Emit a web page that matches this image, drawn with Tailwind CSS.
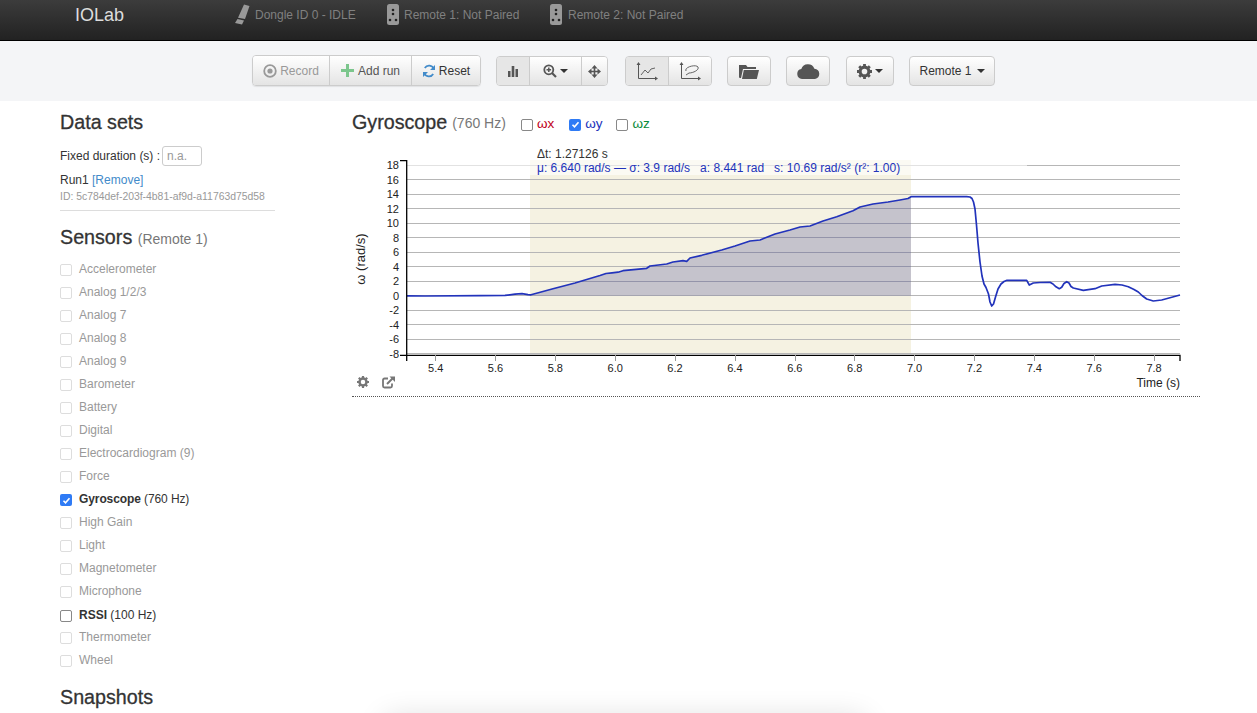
<!DOCTYPE html>
<html lang="en">

<head>
    <meta charset="UTF-8">
    <meta name="viewport" content="width=device-width, initial-scale=1.0">
    <title>IOLab</title>
    <script src="https://cdn.jsdelivr.net/npm/@tailwindcss/browser@4"></script>
</head>

<body>
    <div class="relative h-[713px] overflow-hidden bg-white text-[12px] text-[#333] font-['Liberation_Sans',Arial,sans-serif]">

        <!-- top bar -->
        <div class="flex h-[41px] items-start border-b border-black bg-gradient-to-b from-[#3c3c3c] to-[#222] pl-[75px] pt-[3px] text-[#808080]">
            <div class="w-[159px] text-[18px] leading-[24px] text-[#ddd]">IOLab</div>
            <div class="flex w-[153px] items-center">
                <svg class="h-[21px] w-[16px]" viewBox="0 0 16 21"><path fill="#999" d="M10 .5 15.500 2 11 15 4 13.800ZM3.500 15 10 16.500 8 20.500 1 19Z"/></svg>
                <span class="ml-[5px] pt-px leading-[22px]">Dongle ID 0 - IDLE</span>
            </div>
            <div class="flex w-[163px] items-center">
                <svg class="h-[21px] w-[12px]" viewBox="0 0 12 21"><rect width="12" height="21" rx="2.500" fill="#999"/><circle cx="6" cy="6" r="1.300" fill="#222"/><circle cx="6" cy="10" r="1.300" fill="#222"/><circle cx="3" cy="16" r="1.300" fill="#222"/><circle cx="9" cy="16" r="1.300" fill="#222"/></svg>
                <span class="ml-[5px] pt-px leading-[22px]">Remote 1: Not Paired</span>
            </div>
            <div class="flex items-center">
                <svg class="h-[21px] w-[12px]" viewBox="0 0 12 21"><rect width="12" height="21" rx="2.500" fill="#999"/><circle cx="6" cy="6" r="1.300" fill="#222"/><circle cx="6" cy="10" r="1.300" fill="#222"/><circle cx="3" cy="16" r="1.300" fill="#222"/><circle cx="9" cy="16" r="1.300" fill="#222"/></svg>
                <span class="ml-[6px] pt-px leading-[22px]">Remote 2: Not Paired</span>
            </div>
        </div>

        <!-- toolbar -->
        <div class="flex h-[60px] items-start bg-[#f4f5f7] pl-[252px] pt-[14px]">
            <div class="flex h-[31px] rounded-[4px] border border-[#ccc] shadow-[0_1px_1px_rgba(0,0,0,.08)]">
                <div class="flex w-[77px] items-center justify-center gap-[3px] rounded-l-[3px] border-r border-[#ccc] bg-gradient-to-b from-white to-[#e4e4e4] text-[#999]">
                    <svg class="h-[14px] w-[14px]" viewBox="0 0 14 14"><circle cx="7" cy="7" r="5.800" fill="none" stroke="#999" stroke-width="1.800"/><circle cx="7" cy="7" r="2.600" fill="#999"/></svg>
                    Record
                </div>
                <div class="flex w-[82px] items-center justify-center gap-[4px] border-r border-[#ccc] bg-gradient-to-b from-white to-[#e4e4e4] text-[#555]">
                    <svg class="h-[13px] w-[13px]" viewBox="0 0 13 13"><path fill="#7cc68d" d="M5 0h3v5h5v3H8v5H5V8H0V5h5z"/></svg>
                    Add run
                </div>
                <div class="flex w-[68px] items-center justify-center gap-[3px] rounded-r-[3px] bg-gradient-to-b from-white to-[#e4e4e4]">
                    <svg class="h-[14px] w-[14px]" viewBox="0 0 14 14"><path fill="none" stroke="#428bca" stroke-width="1.800" d="M11.800 5A5 5 0 0 0 2.800 4M2.200 9A5 5 0 0 0 11.200 10"/><path fill="#428bca" d="M13 1v5H8zM1 13V8h5z"/></svg>
                    Reset
                </div>
            </div>

            <div class="ml-[15px] mt-px flex h-[30px] rounded-[4px] border border-[#ccc]">
                <div class="flex w-[33px] items-center justify-center rounded-l-[3px] border-r border-[#ccc] bg-[#e6e6e6]">
                    <svg class="h-[12px] w-[12px]" viewBox="0 0 12 12"><path fill="#555" d="M1 6h2.500v6H1zM4.700 1h2.600v11H4.700zM8.500 4H11v8H8.500z"/></svg>
                </div>
                <div class="flex w-[52px] items-center justify-center gap-[3px] border-r border-[#ccc] bg-gradient-to-b from-white to-[#e4e4e4]">
                    <svg class="h-[14px] w-[14px]" viewBox="0 0 14 14"><circle cx="5.800" cy="5.800" r="4.500" fill="none" stroke="#555" stroke-width="1.800"/><path stroke="#555" stroke-width="2.200" d="m9 9 4 4"/><path stroke="#555" stroke-width="1.500" d="M3.500 5.800h4.600M5.800 3.500v4.600"/></svg>
                    <span class="h-0 w-0 border-x-[4px] border-t-[4px] border-x-transparent border-t-[#333]"></span>
                </div>
                <div class="flex w-[25px] items-center justify-center rounded-r-[3px] bg-gradient-to-b from-white to-[#e4e4e4]">
                    <svg class="h-[13px] w-[13px]" viewBox="0 0 13 13"><path fill="#555" d="M5.700 3.500h1.600v2.200h2.200V3.500L13 6.500l-3.500 3V7.300H7.300v2.200h2.200l-3 3.500-3-3.500h2.200V7.300H3.500v2.200L0 6.500l3.500-3v2.200h2.200V3.500H3.500l3-3.500 3 3.500z"/></svg>
                </div>
            </div>

            <div class="ml-[17px] mt-px flex h-[30px] rounded-[4px] border border-[#ccc]">
                <div class="flex w-[43px] items-center justify-center rounded-l-[3px] border-r border-[#ccc] bg-[#e6e6e6]">
                    <svg class="h-[19px] w-[22px]" viewBox="0 0 22 19" fill="none" stroke="#555"><path d="M2.500 1v15.500H21"/><path fill="#555" stroke="none" d="M2.500 0 4.500 3H.5zM22 16.500 19 18.500v-4z"/><path stroke-width=".9" d="M5 13 9 8l3 3 3-4 4-1"/></svg>
                </div>
                <div class="flex w-[42px] items-center justify-center rounded-r-[3px] bg-gradient-to-b from-white to-[#e4e4e4]">
                    <svg class="h-[19px] w-[22px]" viewBox="0 0 22 19" fill="none" stroke="#555"><path d="M2.500 1v15.500H21"/><path fill="#555" stroke="none" d="M2.500 0 4.500 3H.5zM22 16.500 19 18.500v-4z"/><path stroke-width=".9" d="M7 9c-2-4 10-7 12-4 1.500 3-5 6-9 6l-3 2"/></svg>
                </div>
            </div>

            <div class="ml-[15px] mt-px flex h-[30px] w-[44px] items-center justify-center rounded-[4px] border border-[#ccc] bg-gradient-to-b from-white to-[#e4e4e4]">
                <svg class="h-[15px] w-[20px]" viewBox="0 0 20 15"><path fill="#555" d="M0 1h7l1.500 2H17v2H4L2 14H.5L0 13zM4.800 6H20l-2.200 9H3z"/></svg>
            </div>
            <div class="ml-[15px] mt-px flex h-[30px] w-[44px] items-center justify-center rounded-[4px] border border-[#ccc] bg-gradient-to-b from-white to-[#e4e4e4]">
                <svg class="h-[16px] w-[23px]" viewBox="0 0 23 16"><path fill="#555" d="M5 16A5 5 0 0 1 4.300 6.100 7 7 0 0 1 17.400 5.700 5.200 5.200 0 0 1 18 16z"/></svg>
            </div>
            <div class="ml-[16px] mt-px flex h-[30px] w-[48px] items-center justify-center gap-[3px] rounded-[4px] border border-[#ccc] bg-gradient-to-b from-white to-[#e4e4e4]">
                <svg class="h-[15px] w-[15px]" viewBox="0 0 24 24"><circle cx="12" cy="12" r="7" fill="none" stroke="#555" stroke-width="5"/><g stroke="#555" stroke-width="4.500"><path d="M12 0v5M12 19v5M0 12h5M19 12h5M3.500 3.500 7 7M17 17l3.500 3.500M20.500 3.500 17 7M7 17l-3.500 3.500"/></g></svg>
                <span class="h-0 w-0 border-x-[4px] border-t-[4px] border-x-transparent border-t-[#333]"></span>
            </div>
            <div class="ml-[15px] mt-px flex h-[30px] w-[86px] items-center justify-center gap-[5px] rounded-[4px] border border-[#ccc] bg-gradient-to-b from-white to-[#e4e4e4]">
                Remote 1
                <span class="h-0 w-0 border-x-[4px] border-t-[4px] border-x-transparent border-t-[#333]"></span>
            </div>
        </div>

        <div class="flex">
            <!-- left column -->
            <div class="ml-[60px] w-[215px]">
                <h3 class="mt-[10px] text-[19.700px] leading-[22px] [-webkit-text-stroke:0.3px]">Data sets</h3>
                <div class="mt-[13px] flex items-center">
                    Fixed duration (s) :
                    <span class="ml-[2px] h-[20px] w-[40px] rounded-[3px] border border-[#ccc] pl-[4px] leading-[18px] text-[#999]">n.a.</span>
                </div>
                <div class="mt-[6px] leading-[17px]">Run1 <span class="text-[#428bca]">[Remove]</span></div>
                <div class="mt-px pb-[7px] text-[10.400px] leading-[13px] text-[#999] border-b border-[#ddd]">ID: 5c784def-203f-4b81-af9d-a11763d75d58</div>

                <h3 class="mt-[15px] text-[19.700px] leading-[22px]"><span class="[-webkit-text-stroke:0.3px]">Sensors</span> <span class="text-[14px] text-[#777]">(Remote 1)</span></h3>

                <div class="mt-[7px] flex flex-col text-[#999]">
                    <div class="flex h-[23px] items-center gap-[7px]"><span class="mt-[2px] size-[12px] rounded-[2px] border border-[#ddd]"></span>Accelerometer</div>
                    <div class="flex h-[23px] items-center gap-[7px]"><span class="mt-[2px] size-[12px] rounded-[2px] border border-[#ddd]"></span>Analog 1/2/3</div>
                    <div class="flex h-[23px] items-center gap-[7px]"><span class="mt-[2px] size-[12px] rounded-[2px] border border-[#ddd]"></span>Analog 7</div>
                    <div class="flex h-[23px] items-center gap-[7px]"><span class="mt-[2px] size-[12px] rounded-[2px] border border-[#ddd]"></span>Analog 8</div>
                    <div class="flex h-[23px] items-center gap-[7px]"><span class="mt-[2px] size-[12px] rounded-[2px] border border-[#ddd]"></span>Analog 9</div>
                    <div class="flex h-[23px] items-center gap-[7px]"><span class="mt-[2px] size-[12px] rounded-[2px] border border-[#ddd]"></span>Barometer</div>
                    <div class="flex h-[23px] items-center gap-[7px]"><span class="mt-[2px] size-[12px] rounded-[2px] border border-[#ddd]"></span>Battery</div>
                    <div class="flex h-[23px] items-center gap-[7px]"><span class="mt-[2px] size-[12px] rounded-[2px] border border-[#ddd]"></span>Digital</div>
                    <div class="flex h-[23px] items-center gap-[7px]"><span class="mt-[2px] size-[12px] rounded-[2px] border border-[#ddd]"></span>Electrocardiogram (9)</div>
                    <div class="flex h-[23px] items-center gap-[7px]"><span class="mt-[2px] size-[12px] rounded-[2px] border border-[#ddd]"></span>Force</div>
                    <div class="flex h-[23px] items-center gap-[7px] pt-px text-[#333]">
                        <span class="mt-[2px] flex size-[12px] items-center justify-center rounded-[2px] bg-[#2f7bf5]"><svg class="size-[9px]" viewBox="0 0 9 9"><path fill="none" stroke="#fff" stroke-width="1.600" d="m1.500 4.800 2 2 4-4.600"/></svg></span>
                        <span class="tracking-[-0.1px]"><b>Gyroscope</b> (760 Hz)</span>
                    </div>
                    <div class="flex h-[23px] items-center gap-[7px]"><span class="mt-[2px] size-[12px] rounded-[2px] border border-[#ddd]"></span>High Gain</div>
                    <div class="flex h-[23px] items-center gap-[7px]"><span class="mt-[2px] size-[12px] rounded-[2px] border border-[#ddd]"></span>Light</div>
                    <div class="flex h-[23px] items-center gap-[7px]"><span class="mt-[2px] size-[12px] rounded-[2px] border border-[#ddd]"></span>Magnetometer</div>
                    <div class="flex h-[23px] items-center gap-[7px]"><span class="mt-[2px] size-[12px] rounded-[2px] border border-[#ddd]"></span>Microphone</div>
                    <div class="flex h-[23px] items-center gap-[7px] pt-[2px] text-[#333]"><span class="mt-[2px] size-[12px] rounded-[2px] border border-[#888]"></span><span><b>RSSI</b> (100 Hz)</span></div>
                    <div class="flex h-[23px] items-center gap-[7px]"><span class="mt-[2px] size-[12px] rounded-[2px] border border-[#ddd]"></span>Thermometer</div>
                    <div class="flex h-[23px] items-center gap-[7px]"><span class="mt-[2px] size-[12px] rounded-[2px] border border-[#ddd]"></span>Wheel</div>
                </div>

                <h3 class="mt-[15px] text-[19.700px] leading-[22px] [-webkit-text-stroke:0.3px]">Snapshots</h3>
            </div>

            <!-- chart column -->
            <div class="ml-[77px] w-[848px]">
                <div class="mt-[10px] flex h-[22px] items-center">
                    <h3 class="mt-[2px] text-[19.700px] [-webkit-text-stroke:0.3px]">Gyroscope</h3>
                    <span class="ml-[5px] mt-[3px] text-[14px] text-[#777]">(760 Hz)</span>
                    <span class="ml-[15px] mt-[5px] size-[12px] rounded-[2px] border border-[#888]"></span>
                    <span class="ml-[4px] mt-[4px] text-[13.500px] text-[#c00020]">ωx</span>
                    <span class="ml-[15px] mt-[5px] flex size-[12px] items-center justify-center rounded-[2px] bg-[#2f7bf5]"><svg class="size-[9px]" viewBox="0 0 9 9"><path fill="none" stroke="#fff" stroke-width="1.600" d="m1.500 4.800 2 2 4-4.600"/></svg></span>
                    <span class="ml-[4px] mt-[4px] text-[13.500px] text-[#2233bb]">ωy</span>
                    <span class="ml-[14px] mt-[5px] size-[12px] rounded-[2px] border border-[#888]"></span>
                    <span class="ml-[4px] mt-[4px] text-[13.500px] text-[#0a8a3a]">ωz</span>
                </div>

                <div class="mt-[10px] border-b border-dotted border-[#555]">
                    <svg class="block" width="848" height="253" viewBox="352 143 848 253">
                        <rect x="530" y="160" width="381" height="194" fill="#f5f2e2"/>

                        <g stroke="#b6b6b6" stroke-width="1">
                            <path d="M407 165.500H1180M407 179.500H1180M407 194.500H1180M407 208.500H1180M407 223.500H1180M407 237.500H1180M407 252.500H1180M407 266.500H1180M407 281.500H1180M407 295.500H1180M407 310.500H1180M407 324.500H1180M407 339.500H1180M407 353.500H1180"/>
                        </g>

                        <polygon fill="#1a1a80" fill-opacity=".22" points="530,295.6 531,294.800 553,288.700 575,283 590,278.500 600,275.500 606,273.500 612,272.800 618,272.200 623,270.700 646.700,268.300 650,266 666.700,264 673,262 683,260.700 686.700,261.300 690,258 701.700,255.300 721.700,250 735,246 750,241 760,240 775,234 790,230 800,227 810,226 823,221 836.700,216.700 853,210.700 860,207 873,204 888,202 900,200 908,198.500 911,196.700 911,295.600"/>
                        <rect x="406" y="160" width="621" height="15" fill="#fff" fill-opacity=".6"/>

                        <polyline fill="none" stroke="#2233bb" stroke-width="1.700" stroke-linejoin="round" points="407,295.800 425,296 480,295.600 505,295.400 515,294.200 522,293.700 528,294.600 531,294.800 553,288.700 575,283 590,278.500 600,275.500 606,273.500 612,272.800 618,272.200 623,270.700 646.700,268.300 650,266 666.700,264 673,262 683,260.700 686.700,261.300 690,258 701.700,255.300 721.700,250 735,246 750,241 760,240 775,234 790,230 800,227 810,226 823,221 836.700,216.700 853,210.700 860,207 873,204 888,202 900,200 908,198.500 911,196.700 966.700,196.700 970,197 972,198.500 973.500,202 975,209 976.500,225 978,243 980,262 982,276 984,284 986,287.500 988.500,294 990,302 991.700,306 993.500,304 995.500,297 998,289 1001,284 1004,281.500 1007,280.300 1026.700,280.300 1029.300,285 1033.300,283 1040,282.500 1050,282.300 1053,284 1056,286.800 1059.300,288.700 1061.700,287.300 1064,283.500 1066.700,281.700 1069,283 1071,286.500 1073.300,288 1083.300,290.300 1095,288.700 1101.700,286 1115,284.300 1122,285 1128.300,286.700 1134,289.500 1138.300,292 1142,295.500 1146.700,299 1153.300,301 1161.700,300 1180,295"/>

                        <path fill="none" stroke="#000" stroke-width="1.300" d="M400 160.700H406.700V355.300H400M406.700 361V355.300H1180V361"/>
                        <path stroke="#999" d="M435.500 355V361M495.500 355V361M555.500 355V361M615.500 355V361M675.500 355V361M735.500 355V361M795.500 355V361M854.500 355V361M914.500 355V361M974.500 355V361M1034.500 355V361M1094.500 355V361M1154.500 355V361"/>

                        <g class="fill-[#222] text-[11px]" text-anchor="end">
                            <text x="399" y="169">18</text><text x="399" y="183.500">16</text><text x="399" y="198">14</text><text x="399" y="212.500">12</text><text x="399" y="227">10</text><text x="399" y="241.500">8</text><text x="399" y="256">6</text><text x="399" y="270.500">4</text><text x="399" y="285">2</text><text x="399" y="299.500">0</text><text x="399" y="314">-2</text><text x="399" y="328.500">-4</text><text x="399" y="343">-6</text><text x="399" y="357.500">-8</text>
                        </g>
                        <g class="fill-[#222] text-[11px]" text-anchor="middle">
                            <text x="435.700" y="372">5.4</text><text x="495.500" y="372">5.6</text><text x="555.300" y="372">5.8</text><text x="615.200" y="372">6.0</text><text x="675" y="372">6.2</text><text x="734.900" y="372">6.4</text><text x="794.800" y="372">6.6</text><text x="854.700" y="372">6.8</text><text x="914.600" y="372">7.0</text><text x="974.400" y="372">7.2</text><text x="1034.300" y="372">7.4</text><text x="1094.200" y="372">7.6</text><text x="1154.100" y="372">7.8</text>
                        </g>
                        <text class="fill-[#222] text-[12px]" x="1180" y="387" text-anchor="end">Time (s)</text>
                        <text class="fill-[#222] text-[13px]" transform="translate(365 259) rotate(-90)" text-anchor="middle">ω (rad/s)</text>

                        <text class="fill-[#333] text-[12px]" x="537" y="158">Δt: 1.27126 s</text>
                        <text class="fill-[#2233bb] text-[12px] whitespace-pre" x="537" y="172">μ: 6.640 rad/s — σ: 3.9 rad/s   a: 8.441 rad   s: 10.69 rad/s² (r²: 1.00)</text>

                        <g transform="translate(357 376)">
                            <circle cx="6" cy="6" r="3.500" fill="none" stroke="#777" stroke-width="2.500"/>
                            <path stroke="#777" stroke-width="2.200" d="M6 0v2.500M6 9.500V12M0 6h2.500M9.500 6H12M1.800 1.800l1.700 1.700M8.500 8.500l1.700 1.700M10.200 1.800 8.500 3.500M3.500 8.500l-1.700 1.700"/>
                        </g>
                        <g transform="translate(382 376)">
                            <path fill="none" stroke="#777" stroke-width="1.800" d="M6 2.500H2.500A1.500 1.500 0 0 0 1 4v6a1.500 1.500 0 0 0 1.500 1.500h6A1.500 1.500 0 0 0 10 10V7.500"/>
                            <path stroke="#777" stroke-width="2" d="M5 8 10.500 2.500"/>
                            <path fill="#777" d="M7.500 .5H13V6z"/>
                        </g>
                    </svg>
                </div>
            </div>
        </div>

        <!-- box just below the fold, only its shadow shows -->
        <div class="absolute left-[385px] top-[718px] h-[40px] w-[480px] rounded-[6px] bg-white shadow-[0_0_30px_rgba(0,0,0,.14)]"></div>
    </div>
</body>

</html>
